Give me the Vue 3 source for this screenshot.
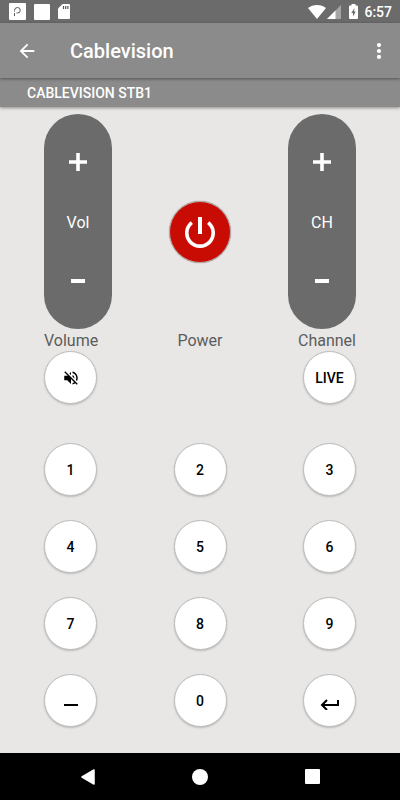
<template>
  <div class="screen">
    <div class="status-bar">
      <div class="status-group notices">
        <svg width="17" height="17" viewBox="0 0 17 17" aria-hidden="true">
          <rect width="17" height="17" rx="1" fill="#fff" />
          <path d="M5.500 13V10M5.500 8.500V7.500A3 3 0 0 1 8.500 4.500a2.700 2.700 0 0 1 0 5.500H7.500" fill="none" stroke="#555" stroke-width="1" />
        </svg>
        <svg width="16" height="16" viewBox="0 0 16 16" aria-hidden="true">
          <rect width="16" height="16" rx="1" fill="#fff" />
        </svg>
        <svg class="sd-card" width="12" height="15" viewBox="0 0 12 15" aria-hidden="true">
          <path d="M4.500 0H11a1 1 0 0 1 1 1v13a1 1 0 0 1-1 1H1a1 1 0 0 1-1-1V4.500z" fill="#fff" />
          <path d="M5.500 2v3M7.700 2v3M9.900 2v3" stroke="#555" stroke-width="1.200" />
        </svg>
      </div>
      <div class="status-group">
        <svg width="18" height="14" viewBox="0 0 18 14" aria-hidden="true">
          <path d="M9 14L0 3C2.500 1 5.500 0 9 0s6.500 1 9 3z" fill="#fff" />
        </svg>
        <svg class="signal" width="14" height="14" viewBox="0 0 14 14" aria-hidden="true">
          <path d="M14 0v14H0z" fill="#a5a5a5" />
          <path d="M8.500 5.500V14H0z" fill="#fff" />
        </svg>
        <svg class="battery" width="9" height="15" viewBox="0 0 9 15" aria-hidden="true">
          <path d="M2.500 0h4v1.500H8a1 1 0 0 1 1 1V14a1 1 0 0 1-1 1H1a1 1 0 0 1-1-1V2.500a1 1 0 0 1 1-1h1.500z" fill="#fff" />
          <path d="M5.500 4L2.300 9H4v3.500L6.800 7.500H5z" fill="#6b6b6b" />
        </svg>
        <span class="clock">6:57</span>
      </div>
    </div>

    <header class="app-bar">
      <button class="icon-button" type="button" aria-label="Back">
        <svg width="22" height="22" viewBox="0 0 24 24">
          <path d="M20 11H7.830l5.590-5.590L12 4l-8 8 8 8 1.410-1.410L7.830 13H20v-2z" fill="#fff" />
        </svg>
      </button>
      <h1 class="title">Cablevision</h1>
      <button class="icon-button more" type="button" aria-label="More options">
        <svg width="22" height="22" viewBox="0 0 24 24">
          <circle cx="12" cy="5.500" r="2.300" fill="#fff" />
          <circle cx="12" cy="12" r="2.300" fill="#fff" />
          <circle cx="12" cy="18.500" r="2.300" fill="#fff" />
        </svg>
      </button>
    </header>

    <h2 class="device-name">CABLEVISION STB1</h2>

    <main class="remote">
      <section class="row">
        <div v-for="rocker in rockers" :key="rocker.label" class="rocker" :class="rocker.side">
          <button class="rocker-button" type="button" :aria-label="`${rocker.name} up`">
            <svg width="18" height="18" viewBox="0 0 18 18">
              <path d="M9 0v18M0 9h18" stroke="#fff" stroke-width="3.600" />
            </svg>
          </button>
          <span class="rocker-label">{{ rocker.label }}</span>
          <button class="rocker-button" type="button" :aria-label="`${rocker.name} down`">
            <svg width="14" height="4" viewBox="0 0 14 4">
              <path d="M0 2h14" stroke="#fff" stroke-width="4" />
            </svg>
          </button>
        </div>
        <button class="power" type="button" aria-label="Power">
          <svg width="32" height="32" viewBox="0 0 32 32">
            <path d="M7.800 6.600a13.200 13.200 0 1 0 16.400 0" fill="none" stroke="#fff" stroke-width="3.600" />
            <path d="M16 1v17" stroke="#fff" stroke-width="4" />
          </svg>
        </button>
      </section>

      <div class="row captions">
        <span>Volume</span>
        <span>Power</span>
        <span>Channel</span>
      </div>

      <div class="row">
        <button class="key" type="button" aria-label="Mute">
          <svg width="18" height="18" viewBox="0 0 24 24">
            <path d="M16.500 12c0-1.770-1.020-3.290-2.500-4.030v2.210l2.450 2.450c.030-.200.050-.410.050-.630zm2.500 0c0 .940-.200 1.820-.540 2.640l1.510 1.510C20.630 14.910 21 13.500 21 12c0-4.280-2.990-7.860-7-8.770v2.060c2.890.860 5 3.540 5 6.710zM4.270 3L3 4.270 7.730 9H3v6h4l5 5v-6.730l4.250 4.250c-.670.520-1.420.930-2.250 1.180v2.060c1.380-.310 2.630-.950 3.690-1.810L19.730 21 21 19.730l-9-9L4.270 3zM12 4L9.910 6.090 12 8.180V4z" fill="#000" />
          </svg>
        </button>
        <button class="key" type="button">LIVE</button>
      </div>

      <div class="row keypad">
        <button v-for="n in 9" :key="n" class="key" type="button">{{ n }}</button>
        <button class="key" type="button" aria-label="Dash">
          <svg width="18" height="18" viewBox="0 0 18 18">
            <path d="M2 13h14" stroke="#000" stroke-width="2" />
          </svg>
        </button>
        <button class="key" type="button">0</button>
        <button class="key" type="button" aria-label="Enter">
          <svg width="20" height="18" viewBox="0 0 20 18">
            <path d="M18 8v5H2M7 8l-5 5 5 5" fill="none" stroke="#000" stroke-width="2" />
          </svg>
        </button>
      </div>
    </main>

    <nav class="nav-bar">
      <button class="icon-button" type="button" aria-label="Back">
        <svg width="14" height="16" viewBox="0 0 14 16">
          <path d="M13 1v14L1 8z" fill="#fff" stroke="#fff" stroke-width="1.500" stroke-linejoin="round" />
        </svg>
      </button>
      <button class="icon-button" type="button" aria-label="Home">
        <svg width="16" height="16" viewBox="0 0 16 16">
          <circle cx="8" cy="8" r="8" fill="#fff" />
        </svg>
      </button>
      <button class="icon-button" type="button" aria-label="Recent apps">
        <svg width="15" height="15" viewBox="0 0 15 15">
          <rect width="15" height="15" rx="1" fill="#fff" />
        </svg>
      </button>
    </nav>
  </div>
</template>

<script setup>
const rockers = [
  { name: 'Volume', label: 'Vol', side: 'left' },
  { name: 'Channel', label: 'CH', side: 'right' },
]
</script>

<style>
body {
  margin: 0;
  background: #e8e7e5;
}
</style>

<style scoped>
.screen {
  display: flex;
  flex-direction: column;
  min-height: 100vh;
  background: #e8e7e5;
  font-family: Roboto, sans-serif;
}

button {
  padding: 0;
  border: 0;
  background: none;
  font-family: inherit;
  cursor: pointer;
}

svg {
  display: block;
}

.status-bar {
  display: flex;
  align-items: center;
  justify-content: space-between;
  height: 23px;
  padding: 0 8px 0 9px;
  background: #6b6b6b;
}

.status-group {
  display: flex;
  align-items: center;
}

.notices {
  gap: 8px;
}

.signal {
  margin-left: 1px;
}

.battery {
  margin: 0 6px 0 8px;
}

.clock {
  font-size: 14px;
  font-weight: 500;
  line-height: 24px;
  color: #fff;
}

.app-bar {
  position: relative;
  display: flex;
  align-items: center;
  height: 55px;
  padding: 0 8px 0 7px;
  background: #8b8b8b;
  box-shadow: 0 1px 3px rgba(0, 0, 0, 0.4);
}

.icon-button {
  display: flex;
  align-items: center;
  justify-content: center;
  width: 40px;
  height: 40px;
}

.title {
  flex: 1;
  margin: 0 0 0 23px;
  font-size: 20px;
  font-weight: 500;
  line-height: 24px;
  color: #fff;
}

.more {
  width: 26px;
}

.device-name {
  margin: 0;
  padding: 1px 27px 0;
  font-size: 14px;
  font-weight: 500;
  line-height: 28px;
  color: #fff;
  background: #8b8b8b;
  box-shadow: 0 1px 3px rgba(0, 0, 0, 0.4);
}

.remote {
  flex: 1;
  padding: 7px 44px 24px;
}

.row {
  display: flex;
  justify-content: space-between;
}

.rocker {
  display: flex;
  flex-direction: column;
  align-items: center;
  width: 68px;
  padding: 1px 0;
  border-radius: 34px;
  background: #6b6b6b;
  color: #fff;
}

.rocker.right {
  order: 2;
}

.rocker-label {
  padding-top: 3px;
  font-size: 16px;
  line-height: 22px;
}

.rocker-button {
  display: flex;
  align-items: center;
  justify-content: center;
  width: 100%;
  height: 94px;
}

.power {
  display: flex;
  align-items: center;
  justify-content: center;
  order: 1;
  width: 62px;
  height: 62px;
  margin-top: 87px;
  border: 1px solid #b9aaaa;
  border-radius: 50%;
  background: #c80c04;
  box-shadow: 0 0 1px rgba(0, 0, 0, 0.4);
}

.captions {
  display: grid;
  grid-template-columns: 1fr 1fr 1fr;
  font-size: 16px;
  line-height: 22px;
  color: #5c5c5c;
}

.captions span:nth-child(2) {
  text-align: center;
}

.captions span:nth-child(3) {
  text-align: right;
}

.key {
  display: flex;
  align-items: center;
  justify-content: center;
  width: 53px;
  height: 53px;
  border: 1px solid #bdbdbd;
  border-radius: 50%;
  background: #fff;
  box-shadow: 0 1px 2px rgba(0, 0, 0, 0.2);
  font-size: 14px;
  font-weight: 500;
  color: #000;
}

.keypad {
  display: grid;
  grid-template-columns: repeat(3, 53px);
  row-gap: 24px;
  margin-top: 39px;
}

.captions {
  padding-top: 2px;
  line-height: 20px;
}

.nav-bar {
  display: flex;
  align-items: center;
  justify-content: space-between;
  height: 47px;
  padding: 0 68px;
  background: #000;
}
</style>
